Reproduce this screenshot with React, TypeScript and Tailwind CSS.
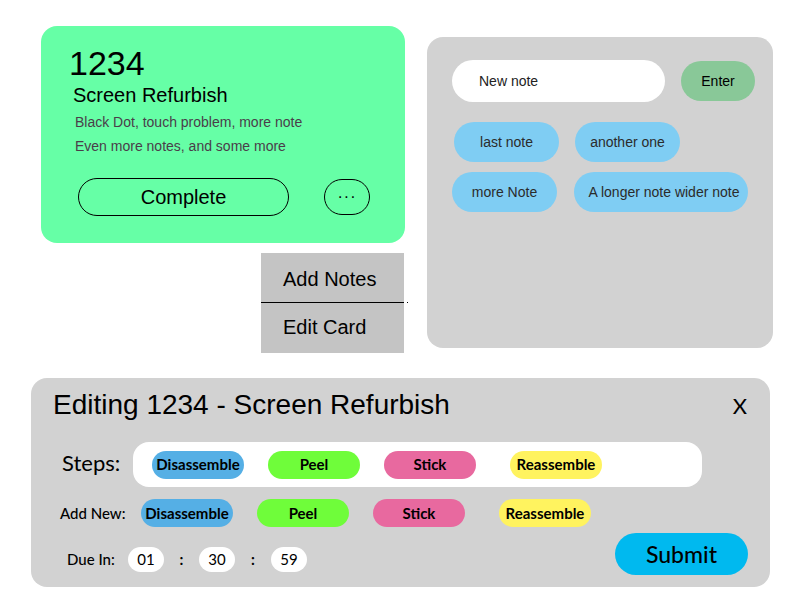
import React from 'react';

const arial = { fontFamily: '"Liberation Sans", Arial, sans-serif' };
const myriad = { fontFamily: 'Lato, "Open Sans", sans-serif' };

const chipColors: Record<string, string> = {
  Disassemble: 'bg-[#55afe5]',
  Peel: 'bg-[#6ffd3a]',
  Stick: 'bg-[#e8699f]',
  Reassemble: 'bg-[#fff35f]',
};

const StepChip = ({ label }: { label: string }) => (
  <div
    className={`flex h-[28px] w-[92px] items-center justify-center rounded-full text-[15px] font-bold text-black ${chipColors[label]}`}
    style={myriad}
  >
    {label}
  </div>
);

const NoteChip = ({ label, className }: { label: string; className: string }) => (
  <div className={`flex h-[40px] items-center justify-center rounded-full bg-[#7fcdf3] text-[14px] text-[#2b2b2b] ${className}`}>
    {label}
  </div>
);

const TimeBox = ({ value }: { value: string }) => (
  <div className="flex h-[25px] w-[36px] items-center justify-center rounded-full bg-white text-[15px] text-black">
    {value}
  </div>
);

const App = () => {
  return (
    <div className="h-[600px] w-[800px] bg-white" style={arial}>
      <div className="flex items-start">
        {/* job card */}
        <div className="ml-[41px] mt-[26px] flex flex-col">
          <div className="h-[217px] w-[364px] rounded-[16px] bg-[#66ffa6] pl-[28px] pt-[17px]">
            <div className="text-[34px] leading-[40px] text-black">1234</div>
            <div className="ml-[4px] text-[20px] leading-[24px] text-black">Screen Refurbish</div>
            <div className="ml-[6px] mt-[3px] text-[14px] leading-[24px] text-[#4a3d4a]">
              <div>Black Dot, touch problem, more note</div>
              <div>Even more notes, and some more</div>
            </div>
            <div className="ml-[9px] mt-[20px] flex items-center gap-[35px]">
              <button className="h-[38px] w-[211px] rounded-full border border-black text-[20px] text-black">
                Complete
              </button>
              <button className="flex h-[36px] w-[46px] items-center justify-center rounded-full border border-black text-[16px] tracking-[1px] text-black">
                ···
              </button>
            </div>
          </div>

          {/* menu */}
          <div className="ml-[220px] mt-[10px] flex w-[143px] flex-col bg-[#c4c4c4] text-[20px] text-black">
            <div className="flex h-[49px] items-center pl-[22px] pt-[2px]">Add Notes</div>
            <div className="relative h-px w-[143px] bg-black">
              <div className="absolute left-[146px] top-0 h-px w-px bg-black" />
            </div>
            <div className="flex h-[50px] items-center pb-[2px] pl-[22px]">Edit Card</div>
          </div>
        </div>

        {/* notes panel */}
        <div className="ml-[22px] mt-[37px] h-[311px] w-[346px] rounded-[16px] bg-[#d2d2d2] pl-[25px] pt-[23px]">
          <div className="flex items-center gap-[16px]">
            <div className="flex h-[42px] w-[213px] items-center rounded-full bg-white pl-[27px] text-[14px] text-[#222]">
              New note
            </div>
            <div className="flex h-[40px] w-[74px] items-center justify-center rounded-full bg-[#89c898] text-[14px] text-black">
              Enter
            </div>
          </div>
          <div className="mt-[20px] flex gap-[16px] pl-[2px]">
            <NoteChip label="last note" className="w-[105px]" />
            <NoteChip label="another one" className="w-[105px]" />
          </div>
          <div className="mt-[10px] flex gap-[17px]">
            <NoteChip label="more Note" className="w-[105px]" />
            <NoteChip label="A longer note wider note" className="h-[38px] w-[174px] pl-[6px]" />
          </div>
        </div>
      </div>

      {/* edit panel */}
      <div className="ml-[31px] mt-[25px] h-[209px] w-[739px] rounded-[16px] bg-[#d2d2d2] px-[22px] pt-[10px]">
        <div className="flex items-center justify-between">
          <div className="text-[28px] leading-[34px] text-black">Editing 1234 - Screen Refurbish</div>
          <div className="mr-[1px] text-[22px] text-black" style={myriad}>X</div>
        </div>

        <div className="mt-[20px] flex items-center">
          <div className="ml-[9px] w-[71px] pb-[4px] text-[22px] text-black" style={myriad}>Steps:</div>
          <div className="flex h-[45px] w-[569px] items-center gap-[24px] rounded-[16px] bg-white pl-[19px]">
            <StepChip label="Disassemble" />
            <StepChip label="Peel" />
            <StepChip label="Stick" />
            <div className="ml-[10px]">
              <StepChip label="Reassemble" />
            </div>
          </div>
        </div>

        <div className="mt-[12px] flex items-center">
          <div className="ml-[7px] w-[81px] text-[15px] font-medium text-black" style={myriad}>Add New:</div>
          <div className="flex gap-[24px]">
            <StepChip label="Disassemble" />
            <StepChip label="Peel" />
            <StepChip label="Stick" />
            <div className="ml-[10px]">
              <StepChip label="Reassemble" />
            </div>
          </div>
        </div>

        <div className="mt-[6px] flex items-end justify-between">
          <div className="mb-[3px] ml-[14px] flex items-center" style={myriad}>
            <div className="w-[61px] text-[15px] font-medium text-black">Due In:</div>
            <TimeBox value="01" />
            <div className="w-[35px] text-center text-[15px] font-bold text-black">:</div>
            <TimeBox value="30" />
            <div className="w-[36px] text-center text-[15px] font-bold text-black">:</div>
            <TimeBox value="59" />
          </div>
          <div
            className="flex h-[42px] w-[133px] items-center justify-center rounded-full bg-[#00b9ef] text-[23px] font-medium text-black"
            style={myriad}
          >
            Submit
          </div>
        </div>
      </div>
    </div>
  );
};

export default App;
